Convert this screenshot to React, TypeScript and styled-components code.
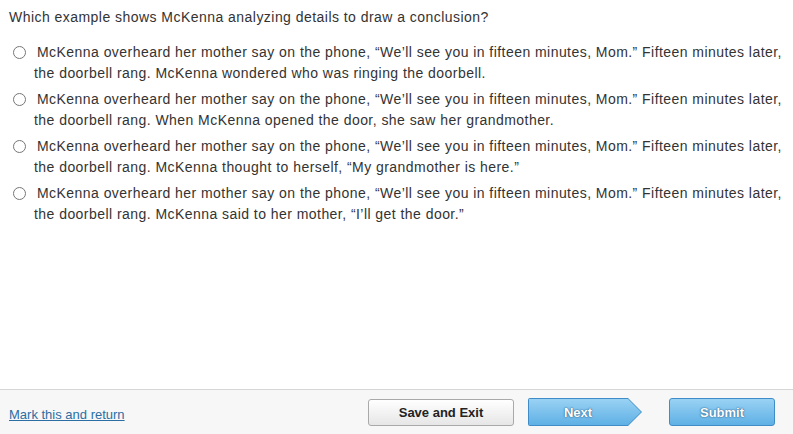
import React from 'react';
import styled, { createGlobalStyle } from 'styled-components';

const GlobalStyle = createGlobalStyle`
  html, body {
    margin: 0;
    padding: 0;
    background: #ffffff;
  }
  body {
    font-family: 'Liberation Sans', Arial, sans-serif;
    color: #333333;
  }
`;

const Page = styled.div`
  width: 793px;
  height: 434px;
  display: flex;
  flex-direction: column;
  overflow: hidden;
`;

const Content = styled.div`
  flex: 1;
  padding: 8px 9px 0 9px;
`;

const Question = styled.p`
  margin: 0 0 15px 0;
  font-size: 14px;
  letter-spacing: 0.46px;
  line-height: 19px;
  color: #333333;
`;

const OptionList = styled.div`
  display: flex;
  flex-direction: column;
  gap: 5px;
`;

const OptionRow = styled.label`
  display: flex;
  align-items: flex-start;
  cursor: pointer;
`;

const Radio = styled.input`
  margin: 4px 0 0 4px;
  width: 13px;
  height: 13px;
  flex: none;
  accent-color: #555;
`;

const OptionText = styled.span`
  margin-left: 8px;
  text-indent: 3px;
  font-size: 14px;
  letter-spacing: 0.45px;
  line-height: 21px;
  color: #333333;
`;

const Footer = styled.div`
  height: 44px;
  border-top: 1px solid #d6d6d6;
  background: #f7f7f7;
  display: flex;
  align-items: center;
  padding: 0 18px 0 9px;
`;

const MarkLink = styled.a`
  font-size: 13px;
  color: #2b6ea3;
  text-decoration: underline;
  margin-top: 4px;
  cursor: pointer;
`;

const ButtonGroup = styled.div`
  margin-left: auto;
  display: flex;
  align-items: center;
`;

const SaveButton = styled.button`
  width: 146px;
  height: 27px;
  border: 1px solid #a9a9a9;
  border-radius: 3px;
  background: linear-gradient(#ffffff, #e6e6e6);
  font-family: 'Liberation Sans', Arial, sans-serif;
  font-weight: bold;
  font-size: 13px;
  color: #222222;
  padding: 0;
  cursor: pointer;
`;

const NextOuter = styled.div`
  margin-left: 14px;
  width: 114px;
  height: 28px;
  background: #3f8cc6;
  clip-path: polygon(0 0, 100px 0, 100% 50%, 100px 100%, 0 100%);
  border-radius: 2px 0 0 2px;
`;

const NextInner = styled.button`
  margin: 1px;
  width: 112px;
  height: 26px;
  border: none;
  padding: 0 14px 0 0;
  clip-path: polygon(0 0, 99px 0, 100% 50%, 99px 100%, 0 100%);
  background: linear-gradient(#9ad2f4, #5eb0e5);
  font-family: 'Liberation Sans', Arial, sans-serif;
  font-weight: bold;
  font-size: 13px;
  color: #ffffff;
  text-shadow: 0 0 2px #2f6690, 0 0 1px #2f6690;
  cursor: pointer;
`;

const SubmitButton = styled.button`
  margin-left: 27px;
  width: 106px;
  height: 28px;
  border: 1px solid #3f8cc6;
  border-radius: 3px;
  background: linear-gradient(#9ad2f4, #5eb0e5);
  font-family: 'Liberation Sans', Arial, sans-serif;
  font-weight: bold;
  font-size: 13px;
  color: #ffffff;
  text-shadow: 0 0 2px #2f6690, 0 0 1px #2f6690;
  padding: 0;
  cursor: pointer;
`;

const options = [
  'McKenna overheard her mother say on the phone, \u201cWe\u2019ll see you in fifteen minutes, Mom.\u201d Fifteen minutes later, the doorbell rang. McKenna wondered who was ringing the doorbell.',
  'McKenna overheard her mother say on the phone, \u201cWe\u2019ll see you in fifteen minutes, Mom.\u201d Fifteen minutes later, the doorbell rang. When McKenna opened the door, she saw her grandmother.',
  'McKenna overheard her mother say on the phone, \u201cWe\u2019ll see you in fifteen minutes, Mom.\u201d Fifteen minutes later, the doorbell rang. McKenna thought to herself, \u201cMy grandmother is here.\u201d',
  'McKenna overheard her mother say on the phone, \u201cWe\u2019ll see you in fifteen minutes, Mom.\u201d Fifteen minutes later, the doorbell rang. McKenna said to her mother, \u201cI\u2019ll get the door.\u201d',
];

const App: React.FC = () => {
  return (
    <Page>
      <GlobalStyle />
      <Content>
        <Question>
          Which example shows McKenna analyzing details to draw a conclusion?
        </Question>
        <OptionList>
          {options.map((text, index) => (
            <OptionRow key={index}>
              <Radio type="radio" name="answer" />
              <OptionText>{text}</OptionText>
            </OptionRow>
          ))}
        </OptionList>
      </Content>
      <Footer>
        <MarkLink>Mark this and return</MarkLink>
        <ButtonGroup>
          <SaveButton>Save and Exit</SaveButton>
          <NextOuter>
            <NextInner>Next</NextInner>
          </NextOuter>
          <SubmitButton>Submit</SubmitButton>
        </ButtonGroup>
      </Footer>
    </Page>
  );
};

export default App;
